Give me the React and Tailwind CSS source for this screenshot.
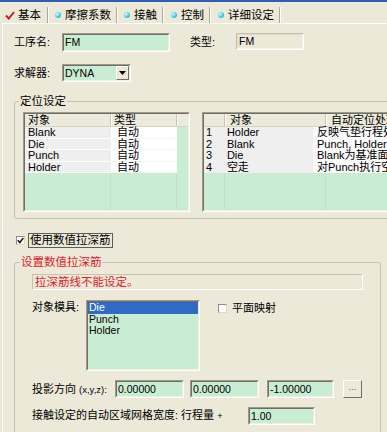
import React from "react";

const GREEN = "bg-[#C9EDD3]";

function Sunken({ className = "", inner = "", children }) {
  return (
    <div
      className={`border border-t-[#9D9A8C] border-l-[#9D9A8C] border-b-white border-r-white ${className}`}
    >
      <div
        className={`h-full w-full border border-t-[#716F64] border-l-[#716F64] border-b-[#F1EFE2] border-r-[#F1EFE2] ${inner}`}
      >
        {children}
      </div>
    </div>
  );
}

function TextBox({ w, h = "h-[19px]", value }) {
  return (
    <Sunken className={`${w} ${h}`} inner={`${GREEN} overflow-hidden`}>
      <div className="pl-[1px] pt-[1px] text-[10.5px] leading-[12px]">{value}</div>
    </Sunken>
  );
}

function Sep() {
  return <div className="h-[16px] w-[2px] border-l border-l-[#ACA899] border-r border-r-white" />;
}

function Dot() {
  return (
    <div className="h-[6px] w-[6px] rounded-full bg-[radial-gradient(circle_at_35%_35%,#d6fbff,#18bfe0_70%)]" />
  );
}

function Tabs() {
  return (
    <div className="flex h-[21px] items-center pl-[5px] pt-[4px] text-[11.5px] leading-[14px]">
      <svg width="10" height="9" viewBox="0 0 10 9" className="mt-[1px]">
        <path d="M1 4.5 L3.8 7.5 L9 1" fill="none" stroke="#D0182B" strokeWidth="2" />
      </svg>
      <span className="ml-[3px] mr-[6px]">基本</span>
      <Sep />
      <div className="ml-[6px]"><Dot /></div>
      <span className="ml-[4px] mr-[5px]">摩擦系数</span>
      <Sep />
      <div className="ml-[6px]"><Dot /></div>
      <span className="ml-[4px] mr-[5px]">接触</span>
      <Sep />
      <div className="ml-[7px]"><Dot /></div>
      <span className="ml-[4px] mr-[5px]">控制</span>
      <Sep />
      <div className="ml-[7px]"><Dot /></div>
      <span className="ml-[4px] mr-[5px]">详细设定</span>
      <Sep />
    </div>
  );
}

function HeadCell({ w, children, last }) {
  return (
    <div
      className={`${w} h-full shrink-0 pl-[3px] text-[11px] leading-[12px] ${
        last ? "" : "border-r border-r-[#C7C4B1] shadow-[1px_0_0_white]"
      }`}
    >
      {children}
    </div>
  );
}

function LeftTable() {
  const rows = ["Blank", "Die", "Punch", "Holder"];
  return (
    <Sunken className="h-[100px] w-[167px] shrink-0" inner={`${GREEN} overflow-hidden flex flex-col`}>
      <div className="flex h-[13px] shrink-0 border-b border-b-[#D6D2C2] bg-[#EBEADB]">
        <HeadCell w="w-[86px]">对象</HeadCell>
        <HeadCell w="w-[66px]">类型</HeadCell>
        <HeadCell w="flex-1" last />
      </div>
      {rows.map((r) => (
        <div key={r} className="flex h-[11.6px] shrink-0 text-[11px] leading-[11.6px]">
          <div className="w-[86px] bg-[#EFEFEF] pl-[3px] border-b border-b-white">{r}</div>
          <div className="w-[66px] bg-white pl-[6px] border-b border-b-[#F4F4F4]">自动</div>
          <div className="flex-1" />
        </div>
      ))}
      <div className="flex flex-1">
        <div className="w-[86px] border-r border-r-[#BFE2C8]" />
        <div className="w-[66px] border-r border-r-[#BFE2C8]" />
      </div>
    </Sunken>
  );
}

function RightTable() {
  const rows = [
    ["1", "Holder", "反映气垫行程处理"],
    ["2", "Blank", "Punch, Holder为基准"],
    ["3", "Die", "Blank为基准面定位"],
    ["4", "空走", "对Punch执行空走"],
  ];
  return (
    <Sunken className="h-[100px] w-[220px] shrink-0" inner={`${GREEN} overflow-hidden flex flex-col`}>
      <div className="flex h-[13px] shrink-0 border-b border-b-[#D6D2C2] bg-[#EBEADB]">
        <HeadCell w="w-[21px]"></HeadCell>
        <HeadCell w="w-[101px]">
          <span className="pl-[2px]">对象</span>
        </HeadCell>
        <HeadCell w="w-[120px]">
          <span className="pl-[2px]">自动定位处理</span>
        </HeadCell>
      </div>
      {rows.map((r) => (
        <div key={r[0]} className="flex h-[11.6px] shrink-0 text-[11px] leading-[11.6px] whitespace-nowrap">
          <div className="w-[21px] bg-[#EFEFEF] pl-[2px]">{r[0]}</div>
          <div className="w-[101px] bg-[#EFEFEF] pl-[4px]">{r[1]}</div>
          <div className="w-[120px] bg-[#FAFAFA] pl-[4px]">{r[2]}</div>
        </div>
      ))}
      <div className="flex flex-1">
        <div className="w-[21px] border-r border-r-[#BFE2C8]" />
        <div className="w-[101px] border-r border-r-[#BFE2C8]" />
      </div>
    </Sunken>
  );
}

function SmallCheck({ checked }) {
  return (
    <div className="flex h-[9px] w-[9px] items-center justify-center border border-t-[#8F8C7C] border-l-[#8F8C7C] border-b-[#DCD9C8] border-r-[#DCD9C8] bg-white">
      {checked && (
        <svg width="7" height="7" viewBox="0 0 7 7">
          <path d="M0.8 3.2 L2.8 5.4 L6.3 1" fill="none" stroke="#1a1a1a" strokeWidth="1.6" />
        </svg>
      )}
    </div>
  );
}

export default function App() {
  return (
    <div className="h-[432px] w-[387px] overflow-hidden bg-[#ECE9D8] font-['Liberation_Sans','Noto_Sans_CJK_SC',sans-serif] text-[11px] text-black">
      <div className="h-[2px] bg-[#2D5FB8]" />
      <Tabs />
      <div className="ml-[2px] h-[420px] border-l border-t border-l-white border-t-white pl-[11px]">
        {/* row 1 */}
        <div className="mt-[9px] flex items-start">
          <div className="w-[48px] pt-[3px] leading-[13px]">工序名:</div>
          <TextBox w="w-[108px]" value="FM" />
          <div className="ml-[20px] w-[46px] pt-[3px] leading-[13px]">类型:</div>
          <div className="h-[17px] w-[68px] border border-t-[#C2BFAE] border-l-[#C2BFAE] border-b-white border-r-white">
            <div className="h-full border border-t-[#E0DDCC] border-l-[#E0DDCC] border-b-[#F6F4EA] border-r-[#F6F4EA] pl-[1px] text-[10.5px] leading-[12px]">
              FM
            </div>
          </div>
        </div>
        {/* row 2 */}
        <div className="mt-[12px] flex items-center">
          <div className="w-[48px] leading-[13px]">求解器:</div>
          <Sunken className="h-[18px] w-[69px]" inner={`${GREEN} flex items-center justify-between`}>
            <div className="pl-[1px] text-[10.5px] leading-[12px]">DYNA</div>
            <div className="mr-[0px] flex h-[14px] w-[13px] items-center justify-center border border-t-white border-l-white border-b-[#716F64] border-r-[#716F64] bg-[#ECE9D8]">
              <svg width="7" height="4" viewBox="0 0 7 4">
                <path d="M0 0 H7 L3.5 4 Z" fill="#000" />
              </svg>
            </div>
          </Sunken>
        </div>
        {/* group 1 */}
        <fieldset className="mt-[12px] h-[125px] w-[420px] rounded-[3px] border border-[#C5C2B0] pl-[8px] pt-[4px]">
          <legend className="ml-[-4px] bg-[#ECE9D8] px-[1px] text-[11.5px] leading-[14px]">定位设定</legend>
          <div className="flex gap-[12px]">
            <LeftTable />
            <RightTable />
          </div>
        </fieldset>
        {/* checkbox */}
        <div className="mt-[13px] flex h-[16px] items-center pl-[2px]">
          <SmallCheck checked />
          <div className="ml-[3px] border border-[#5C5C5C] px-[1px] text-[11.5px] leading-[13px]">使用数值拉深筋</div>
        </div>
        {/* group 2 */}
        <fieldset className="mt-[7px] h-[200px] w-[367px] rounded-[3px] border border-[#C5C2B0] pl-[17px] pt-[5px]">
          <legend className="ml-[-12px] bg-[#ECE9D8] px-[1px] text-[11.5px] leading-[14px] text-[#E0202A]">
            设置数值拉深筋
          </legend>
          <div className="h-[16px] w-[331px] border border-t-[#C5C2B0] border-l-[#C5C2B0] border-b-white border-r-white pl-[2px] text-[11.5px] leading-[14px] text-[#E0202A]">
            拉深筋线不能设定。
          </div>
          {/* list row */}
          <div className="mt-[10px] flex items-start">
            <div className="w-[54px] pt-[1px] leading-[13px]">对象模具:</div>
            <Sunken className="h-[71px] w-[114px]" inner={`${GREEN}`}>
              <div className="h-[11.5px] bg-[#316AC5] pl-[1px] text-[10.5px] leading-[11.5px] text-white">Die</div>
              <div className="h-[11px] pl-[1px] text-[10.5px] leading-[11px]">Punch</div>
              <div className="h-[11px] pl-[1px] text-[10.5px] leading-[11px]">Holder</div>
            </Sunken>
            <div className="ml-[18px] mt-[2px] flex items-center">
              <SmallCheck />
              <span className="ml-[5px] leading-[13px]">平面映射</span>
            </div>
          </div>
          {/* projection row */}
          <div className="mt-[9px] flex items-center">
            <div className="w-[83px] leading-[13px]">
              投影方向 <span className="text-[9.5px]">(x,y,z):</span>
            </div>
            <TextBox w="w-[69px]" h="h-[18px]" value="0.00000" />
            <div className="ml-[6px]">
              <TextBox w="w-[69px]" h="h-[18px]" value="0.00000" />
            </div>
            <div className="ml-[8px]">
              <TextBox w="w-[67px]" h="h-[18px]" value="-1.00000" />
            </div>
            <div className="ml-[9px] flex h-[18px] w-[19px] items-start justify-center border border-t-white border-l-white border-b-[#716F64] border-r-[#716F64] bg-[#ECE9D8] text-[9px] leading-[12px] text-[#555]">
              ...
            </div>
          </div>
          {/* contact row */}
          <div className="mt-[9px] flex items-center">
            <div className="w-[216px] leading-[13px]">
              接触设定的自动区域网格宽度: 行程量 <span className="text-[9px]">+</span>
            </div>
            <TextBox w="w-[67px]" h="h-[18px]" value="1.00" />
          </div>
        </fieldset>
      </div>
    </div>
  );
}
